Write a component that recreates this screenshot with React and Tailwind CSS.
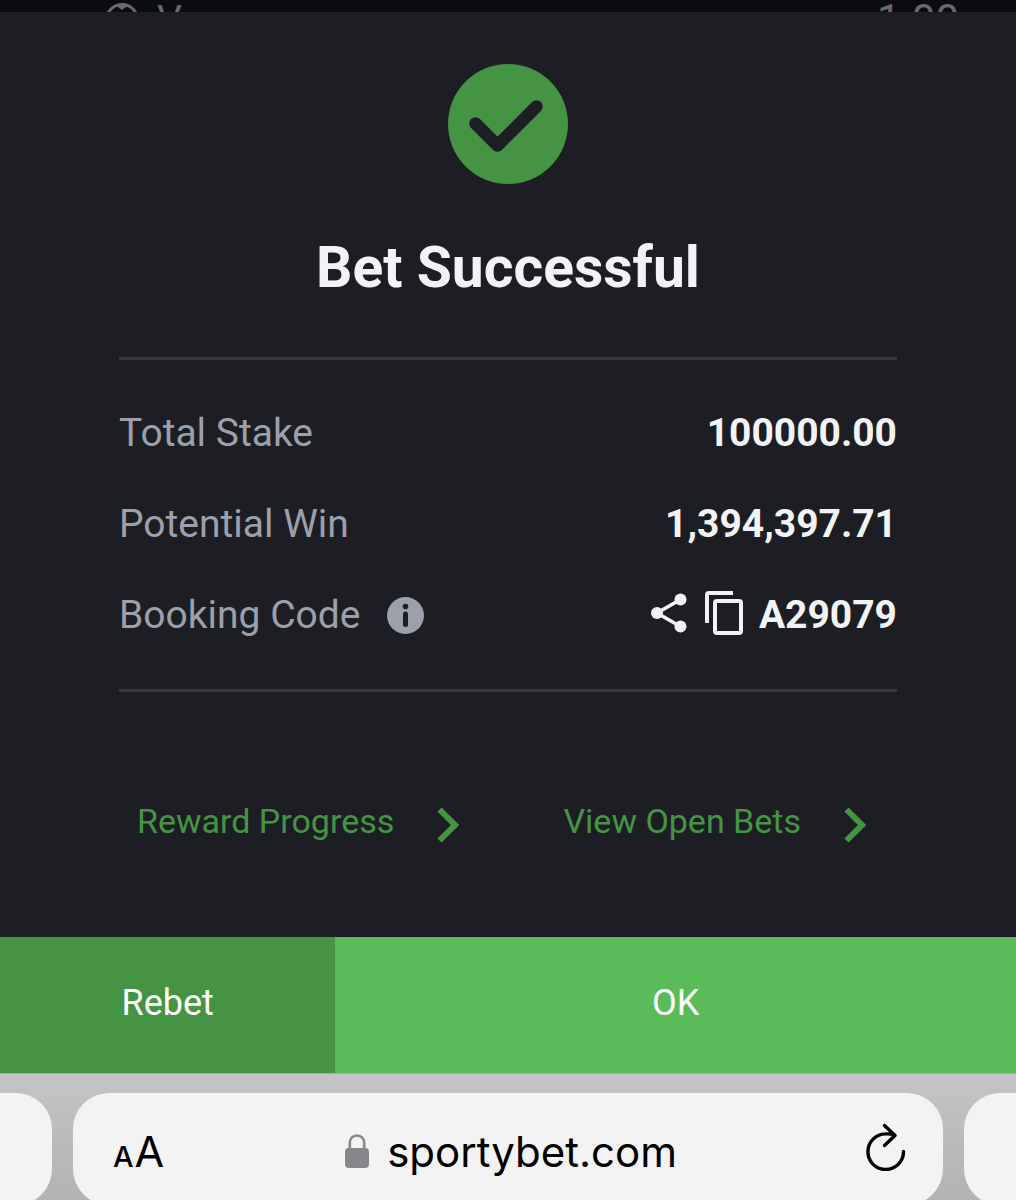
const CheckBadge = () => (
  <svg className="size-[120px]" viewBox="0 0 120 120" fill="none" aria-hidden="true">
    <circle cx="60" cy="60" r="60" fill="#459444" />
    <path
      d="M27.5 59.5 49.5 81.5 88.5 42.5"
      stroke="#1d1e24"
      strokeWidth="12.5"
      strokeLinecap="round"
      strokeLinejoin="round"
    />
  </svg>
);

const InfoIcon = () => (
  <svg className="size-[37px]" viewBox="0 0 37 37" fill="none" aria-hidden="true">
    <circle cx="18.5" cy="18.5" r="18.5" fill="#9ca0ab" />
    <circle cx="18.5" cy="9.5" r="2.8" fill="#1d1e24" />
    <path d="M18.5 17V27.5" stroke="#1d1e24" strokeWidth="5" strokeLinecap="round" />
  </svg>
);

const ShareIcon = () => (
  <svg className="h-[40px] w-[36px]" viewBox="0 0 36 40" fill="none" aria-hidden="true">
    <path d="M29.5 6.5 6 20 29.5 33.5" stroke="#f2f3f5" strokeWidth="3.6" />
    <circle cx="29.5" cy="6.5" r="6" fill="#f2f3f5" />
    <circle cx="6" cy="20" r="6" fill="#f2f3f5" />
    <circle cx="29.5" cy="33.5" r="6" fill="#f2f3f5" />
  </svg>
);

const CopyIcon = () => (
  <svg className="h-[44px] w-[38px]" viewBox="0 0 38 44" fill="none" aria-hidden="true">
    <path d="M2 32V4a2 2 0 0 1 2-2H28" stroke="#f2f3f5" strokeWidth="4" />
    <rect x="10" y="10" width="26" height="32" rx="2" stroke="#f2f3f5" strokeWidth="4" />
  </svg>
);

const Chevron = () => (
  <svg className="mt-2 h-[36px] w-[22px]" viewBox="0 0 22 36" fill="none" aria-hidden="true">
    <path d="M2.5 2.5 18 18 2.5 33.5" stroke="#459444" strokeWidth="6" />
  </svg>
);

const LockIcon = () => (
  <svg className="h-[34px] w-[24px]" viewBox="0 0 24 34" fill="none" aria-hidden="true">
    <path d="M4.8 16V9.5C4.8 4.5 7.8 1.5 12 1.5S19.2 4.5 19.2 9.5V16" stroke="#86868b" strokeWidth="2.6" />
    <rect y="14" width="24" height="20" rx="4" fill="#86868b" />
  </svg>
);

const ReloadIcon = () => (
  <svg className="h-[48px] w-[40px]" viewBox="0 0 40 48" fill="none" aria-hidden="true">
    <path
      d="M37.5 28.5A17.8 17.8 0 1 1 19.7 10.9Q24 10.7 28.5 12M18.5 2.5 29 12.5 18.5 22.5"
      stroke="#000"
      strokeWidth="3.4"
      strokeLinecap="round"
      strokeLinejoin="round"
    />
  </svg>
);

const Row = ({ label, info, children }) => (
  <div className="flex h-12 items-center justify-between">
    <dt className="flex items-center gap-[27px] text-[#9ca0ab]">
      {label}
      {info}
    </dt>
    <dd className="flex items-center font-bold text-[#f2f3f5]">{children}</dd>
  </div>
);

const App = () => {
  return (
    <div className="bg-[#1d1e24] font-['Roboto',sans-serif]">
      {/* page behind the dialog, only its top edge shows */}
      <div className="flex h-3 justify-between overflow-hidden bg-[#0b0c0f] pr-[57px] pl-[105px] text-[42px] leading-10 text-[#68696c]">
        <div className="flex gap-[18px] text-[39px]">
          <svg className="mt-[3px] size-[34px]" viewBox="0 0 34 34" fill="none" aria-hidden="true">
            <circle cx="17" cy="17" r="15.5" stroke="currentColor" strokeWidth="3" />
            <path d="M10 2 17 7 24 2Z" fill="currentColor" />
          </svg>
          <span>Von</span>
        </div>
        <span>1.00</span>
      </div>

      <main className="flex flex-col px-[119px] pt-13">
        <div className="flex flex-col items-center">
          <CheckBadge />
          <h1 className="mt-12 text-[57px] leading-[72px] font-bold text-[#f2f3f5]">
            Bet Successful
          </h1>
        </div>

        <dl className="mt-[53px] flex flex-col gap-[43px] border-y-3 border-[#373743] pt-[49px] pb-[50px] text-[39px] leading-12">
          <Row label="Total Stake">100000.00</Row>
          <Row label="Potential Win">1,394,397.71</Row>
          <Row
            label="Booking Code"
            info={
              <button type="button" aria-label="About booking code">
                <InfoIcon />
              </button>
            }
          >
            <button type="button" aria-label="Share" className="mr-[18px] mb-1">
              <ShareIcon />
            </button>
            <button type="button" aria-label="Copy" className="mr-4 mb-1">
              <CopyIcon />
            </button>
            A29079
          </Row>
        </dl>

        <nav className="flex justify-between pt-[105px] pr-[31px] pb-[92px] pl-[18px] text-[34px] leading-12 text-[#459444]">
          <a href="#rewards" className="flex items-center gap-[43px]">
            Reward Progress
            <Chevron />
          </a>
          <a href="#bets" className="flex items-center gap-[43px]">
            View Open Bets
            <Chevron />
          </a>
        </nav>
      </main>

      <div className="flex h-[136px] text-[36px] text-white">
        <button type="button" className="w-[33%] bg-[#459444] pb-1">
          Rebet
        </button>
        <button type="button" className="flex-1 bg-[#5abb59] pb-1">
          OK
        </button>
      </div>

      {/* browser address bar */}
      <footer className="flex h-[127px] gap-[21px] overflow-hidden border-t border-[#a9aaab] bg-linear-to-b from-[#c4c4c6] to-[#b2b3b4] pt-[19px] font-['Inter',sans-serif] text-black">
        <div className="h-[112px] w-[52px] rounded-r-[36px] bg-[#f3f3f4]" />
        <div className="flex h-[112px] flex-1 items-center justify-between rounded-[36px] bg-[#f3f3f4] pt-1 pr-[37px] pl-10">
          <button type="button" aria-label="Page settings" className="flex items-baseline gap-px">
            <span className="text-[29px] font-medium">A</span>
            <span className="text-[43px]">A</span>
          </button>
          <div className="mr-2 flex items-center gap-[18px] text-[42px]">
            <LockIcon />
            <span>sportybet.com</span>
          </div>
          <button type="button" aria-label="Reload" className="mb-2">
            <ReloadIcon />
          </button>
        </div>
        <div className="h-[112px] w-[52px] rounded-l-[36px] bg-[#f3f3f4]" />
      </footer>
    </div>
  );
};

export default App;
